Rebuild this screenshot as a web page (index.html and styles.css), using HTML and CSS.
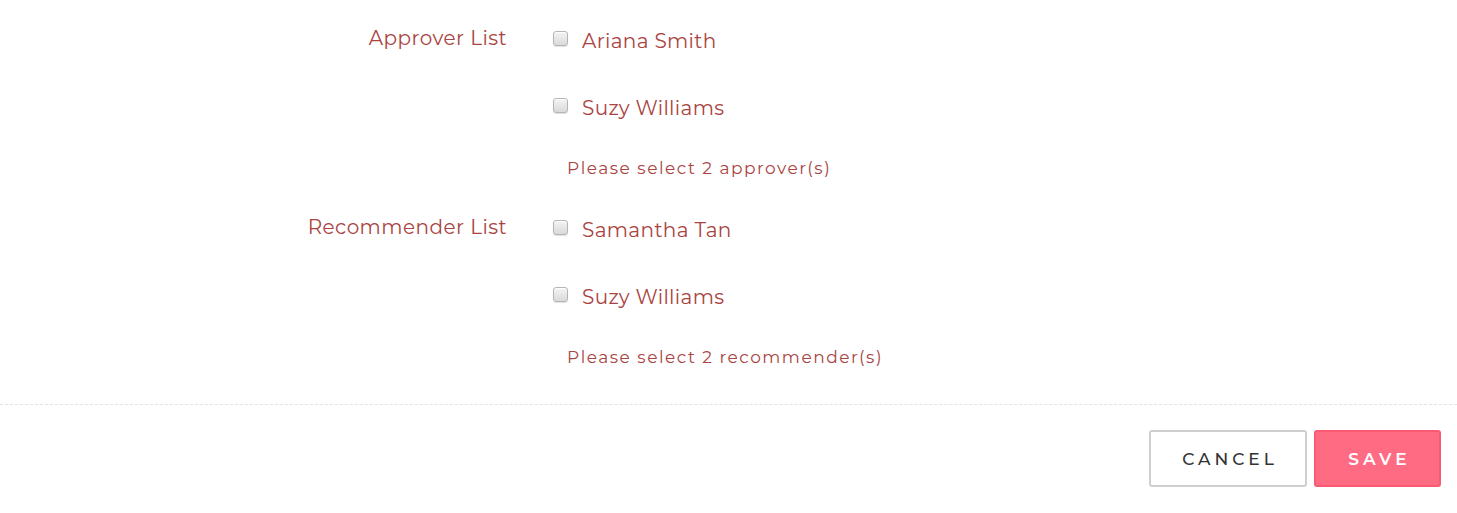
FILE: index.html
```html
<!DOCTYPE html>
<html>
<head>
<meta charset="utf-8">
<link rel="stylesheet" href="styles.css">
</head>
<body>
<div class="form">
  <div class="group">
    <div class="label">Approver List</div>
    <div class="controls">
      <label class="option"><input type="checkbox" class="cb"><span>Ariana Smith</span></label>
      <label class="option"><input type="checkbox" class="cb"><span>Suzy Williams</span></label>
      <div class="error">Please select 2 approver(s)</div>
    </div>
  </div>
  <div class="group">
    <div class="label">Recommender List</div>
    <div class="controls">
      <label class="option"><input type="checkbox" class="cb"><span>Samantha Tan</span></label>
      <label class="option"><input type="checkbox" class="cb"><span>Suzy Williams</span></label>
      <div class="error">Please select 2 recommender(s)</div>
    </div>
  </div>
</div>
<div class="footer">
  <button class="btn btn-cancel">CANCEL</button>
  <button class="btn btn-save">SAVE</button>
</div>
</body>
</html>
```

FILE: styles.css
```css
html, body {
  margin: 0;
  padding: 0;
  background: #fff;
}
body {
  font-family: "Montserrat", "Open Sans", "Liberation Sans", sans-serif;
  color: #a94442;
  width: 1457px;
  height: 513px;
  overflow: hidden;
}
.form {
  padding-top: 28px;
  padding-bottom: 37px;
  display: flex;
  flex-direction: column;
  gap: 39px;
}
.group {
  display: grid;
  grid-template-columns: 506px 1fr;
  column-gap: 47px;
}
.label {
  text-align: right;
  font-size: 20px;
  line-height: 27px;
  margin-top: -3px;
  margin-right: -1px;
  letter-spacing: 0.45px;
}
.controls {
  display: flex;
  flex-direction: column;
}
.option {
  display: flex;
  align-items: flex-start;
  height: 27px;
  font-size: 20px;
  line-height: 27px;
  letter-spacing: 0.35px;
  margin-bottom: 40px;
}
.option:nth-of-type(2) {
  margin-bottom: 36px;
}
.cb {
  appearance: none;
  -webkit-appearance: none;
  width: 15px;
  height: 15px;
  margin: 3px 14px 0 0;
  border: 1px solid #b5b5b5;
  border-radius: 3px;
  background: linear-gradient(#f4f4f4, #d9d9d9);
  box-shadow: inset 0 1px 0 #fff, 0 1px 1px rgba(0,0,0,0.12);
  flex: none;
}
.error {
  padding-left: 14px;
  font-size: 17px;
  line-height: 20px;
  letter-spacing: 1.5px;
}
.footer {
  border-top: 1px dashed #e3e3e3;
  display: flex;
  justify-content: flex-end;
  gap: 7px;
  padding: 25px 16px 0 0;
}
.btn {
  font-family: "Montserrat", "Open Sans", "Liberation Sans", sans-serif;
  height: 57px;
  font-size: 17px;
  letter-spacing: 4px;
  border-radius: 3px;
  cursor: pointer;
  padding: 0 0 0 4px;
}
.btn-cancel {
  width: 158px;
  background: #fff;
  border: 2px solid #cfcfcf;
  color: #333;
  font-weight: 500;
}
.btn-save {
  width: 127px;
  background: #ff6b83;
  border: 2px solid #fa5a73;
  color: #fff;
  font-weight: 600;
}
```
